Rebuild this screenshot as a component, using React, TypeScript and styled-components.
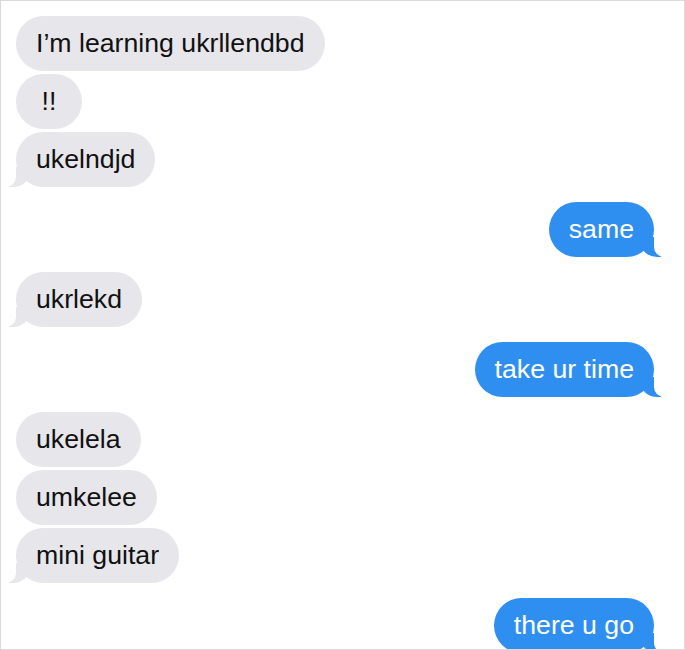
import React from "react";
import styled, { createGlobalStyle, css } from "styled-components";

const GlobalStyle = createGlobalStyle`
  html, body {
    margin: 0;
    padding: 0;
    background: #ffffff;
  }
  #root {
    width: 685px;
    height: 650px;
  }
`;

const Frame = styled.div`
  box-sizing: border-box;
  width: 685px;
  height: 650px;
  border: 1px solid #d9d9d9;
  overflow: hidden;
  background: #ffffff;
  padding: 15px 30px 0 15px;
  display: flex;
  flex-direction: column;
  font-family: "Liberation Sans", Arial, sans-serif;
`;

type Side = "them" | "me";

const Bubble = styled.div<{ $side: Side; $tail: boolean; $gap: number }>`
  position: relative;
  box-sizing: border-box;
  height: 55px;
  min-width: 66px;
  padding: 0 20px;
  margin-top: ${(p) => p.$gap}px;
  border-radius: 28px;
  font-size: 26.7px;
  line-height: 55px;
  text-align: center;
  white-space: nowrap;
  align-self: ${(p) => (p.$side === "me" ? "flex-end" : "flex-start")};
  background: ${(p) => (p.$side === "me" ? "#2f8ff0" : "#e6e6eb")};
  color: ${(p) => (p.$side === "me" ? "#ffffff" : "#111111")};

  ${(p) =>
    p.$tail &&
    p.$side === "them" &&
    css`
      &::before {
        content: "";
        position: absolute;
        bottom: 0;
        left: -7px;
        width: 20px;
        height: 20px;
        background: #e6e6eb;
        border-bottom-right-radius: 16px 14px;
      }
      &::after {
        content: "";
        position: absolute;
        bottom: 0;
        left: -10px;
        width: 10px;
        height: 20px;
        background: #ffffff;
        border-bottom-right-radius: 10px;
      }
    `}

  ${(p) =>
    p.$tail &&
    p.$side === "me" &&
    css`
      &::before {
        content: "";
        position: absolute;
        bottom: 0;
        right: -7px;
        width: 20px;
        height: 20px;
        background: #2f8ff0;
        border-bottom-left-radius: 16px 14px;
      }
      &::after {
        content: "";
        position: absolute;
        bottom: 0;
        right: -10px;
        width: 10px;
        height: 20px;
        background: #ffffff;
        border-bottom-left-radius: 10px;
      }
    `}
`;

const messages: { side: Side; text: string }[] = [
  { side: "them", text: "I’m learning ukrllendbd" },
  { side: "them", text: "!!" },
  { side: "them", text: "ukelndjd" },
  { side: "me", text: "same" },
  { side: "them", text: "ukrlekd" },
  { side: "me", text: "take ur time" },
  { side: "them", text: "ukelela" },
  { side: "them", text: "umkelee" },
  { side: "them", text: "mini guitar" },
  { side: "me", text: "there u go" },
];

export default function App() {
  return (
    <>
      <GlobalStyle />
      <Frame>
        {messages.map((m, i) => {
          const prev = messages[i - 1];
          const next = messages[i + 1];
          const gap = i === 0 ? 0 : prev.side === m.side ? 3 : 15;
          const tail = !next || next.side !== m.side;
          return (
            <Bubble key={i} $side={m.side} $tail={tail} $gap={gap}>
              {m.text}
            </Bubble>
          );
        })}
      </Frame>
    </>
  );
}
